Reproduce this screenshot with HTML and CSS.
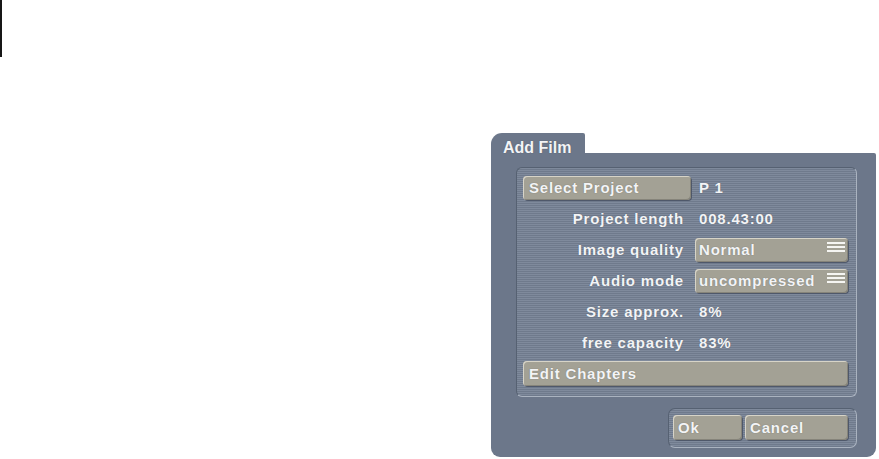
FILE: index.html
```html
<!DOCTYPE html>
<html lang="en">
<head>
<meta charset="utf-8">
<title>Add Film</title>
<link rel="stylesheet" href="styles.css">
</head>
<body>
<div class="screen">
  <div class="marker"></div>
  <div class="dialog">
    <div class="tab">Add Film</div>
    <div class="body">
      <div class="panel">
        <div class="row">
          <button class="btn">Select Project</button>
          <span class="value">P 1</span>
        </div>
        <div class="row">
          <span class="label">Project length</span>
          <span class="value">008.43:00</span>
        </div>
        <div class="row">
          <span class="label">Image quality</span>
          <div class="select">
            <span>Normal</span>
            <svg class="menu" width="18" height="10" viewBox="0 0 18 10"><rect x="0" y="0" width="18" height="2"/><rect x="0" y="4" width="18" height="2"/><rect x="0" y="8" width="18" height="2"/></svg>
          </div>
        </div>
        <div class="row">
          <span class="label">Audio mode</span>
          <div class="select">
            <span>uncompressed</span>
            <svg class="menu" width="18" height="10" viewBox="0 0 18 10"><rect x="0" y="0" width="18" height="2"/><rect x="0" y="4" width="18" height="2"/><rect x="0" y="8" width="18" height="2"/></svg>
          </div>
        </div>
        <div class="row">
          <span class="label">Size approx.</span>
          <span class="value">8%</span>
        </div>
        <div class="row">
          <span class="label">free capacity</span>
          <span class="value">83%</span>
        </div>
        <div class="row">
          <button class="btn wide">Edit Chapters</button>
        </div>
      </div>
      <div class="actions">
        <button class="btn ok">Ok</button>
        <button class="btn cancel">Cancel</button>
      </div>
    </div>
  </div>
</div>
</body>
</html>
```

FILE: styles.css
```css
html, body {
  margin: 0;
  padding: 0;
  background: #ffffff;
}

.screen {
  display: flex;
  align-items: flex-start;
  width: 879px;
  height: 459px;
  overflow: hidden;
  font-family: "Liberation Sans", Arial, sans-serif;
  font-weight: bold;
  color: #f3f4f6;
}

.marker {
  flex: none;
  width: 2px;
  height: 57px;
  background: #161616;
}

.dialog {
  flex: none;
  margin-left: 489px;
  margin-top: 133px;
  width: 385px;
}

.tab {
  width: 94px;
  height: 20px;
  box-sizing: border-box;
  padding: 6px 0 0 12px;
  font-size: 16px;
  line-height: 18px;
  background: #6c778a;
  border-radius: 11px 2px 0 0;
  text-shadow: 0 0 1px rgba(40, 48, 60, 0.5);
}

.body {
  height: 304px;
  box-sizing: border-box;
  padding: 14px 19px 0 25px;
  background: #6c778a;
  border-radius: 0 2px 9px 9px;
  display: flex;
  flex-direction: column;
  align-items: flex-end;
}

.panel {
  align-self: stretch;
  height: 230px;
  box-sizing: border-box;
  border: 1px solid;
  border-color: #566172 #aab3c0 #aab3c0 #566172;
  border-radius: 6px;
  padding: 4px 8px 7px 6px;
  background: repeating-linear-gradient(to bottom, #7f8a9c 0 1px, #6f7a8c 1px 2px);
  display: flex;
  flex-direction: column;
}

.row {
  height: 31px;
  display: grid;
  grid-template-columns: 168px 153px;
  column-gap: 4px;
  align-items: center;
  font-size: 15px;
  letter-spacing: 0.8px;
  text-shadow: 0 0 1px rgba(40, 48, 60, 0.45);
}

.label {
  text-align: right;
  padding-right: 7px;
}

.value {
  padding-left: 4px;
}

.btn {
  font: inherit;
  color: inherit;
  letter-spacing: inherit;
  text-shadow: 0 0 1px rgba(60, 58, 50, 0.5);
  height: 24px;
  margin: 0;
  border: 0;
  border-radius: 4px;
  padding: 0 0 0 6px;
  text-align: left;
  background: #a3a195;
  box-shadow: inset 1px 1px 0 #d7d4c8, inset -1px -1px 0 #86847a, 1px 1px 0 #4f586a;
}

.wide {
  grid-column: 1 / -1;
  height: 25px;
}

.select {
  height: 24px;
  box-sizing: border-box;
  display: flex;
  align-items: center;
  justify-content: space-between;
  padding: 0 3px 0 4px;
  border-radius: 4px;
  background: #a3a195;
  box-shadow: inset 1px 1px 0 #d7d4c8, inset -1px -1px 0 #86847a, 1px 1px 0 #4f586a;
}

.menu {
  display: block;
  margin-top: -6px;
  fill: #f5f5f2;
}

.actions {
  width: 189px;
  height: 40px;
  margin-top: 11px;
  box-sizing: border-box;
  border: 1px solid;
  border-color: #566172 #aab3c0 #aab3c0 #566172;
  border-radius: 7px;
  padding: 6px 8px 0 4px;
  background: repeating-linear-gradient(to bottom, #7f8a9c 0 1px, #6f7a8c 1px 2px);
  display: flex;
  gap: 3px;
  font-size: 15px;
  letter-spacing: 0.8px;
}

.ok,
.cancel {
  height: 25px;
  padding-left: 5px;
}

.ok {
  width: 69px;
}

.cancel {
  width: 103px;
}
```
